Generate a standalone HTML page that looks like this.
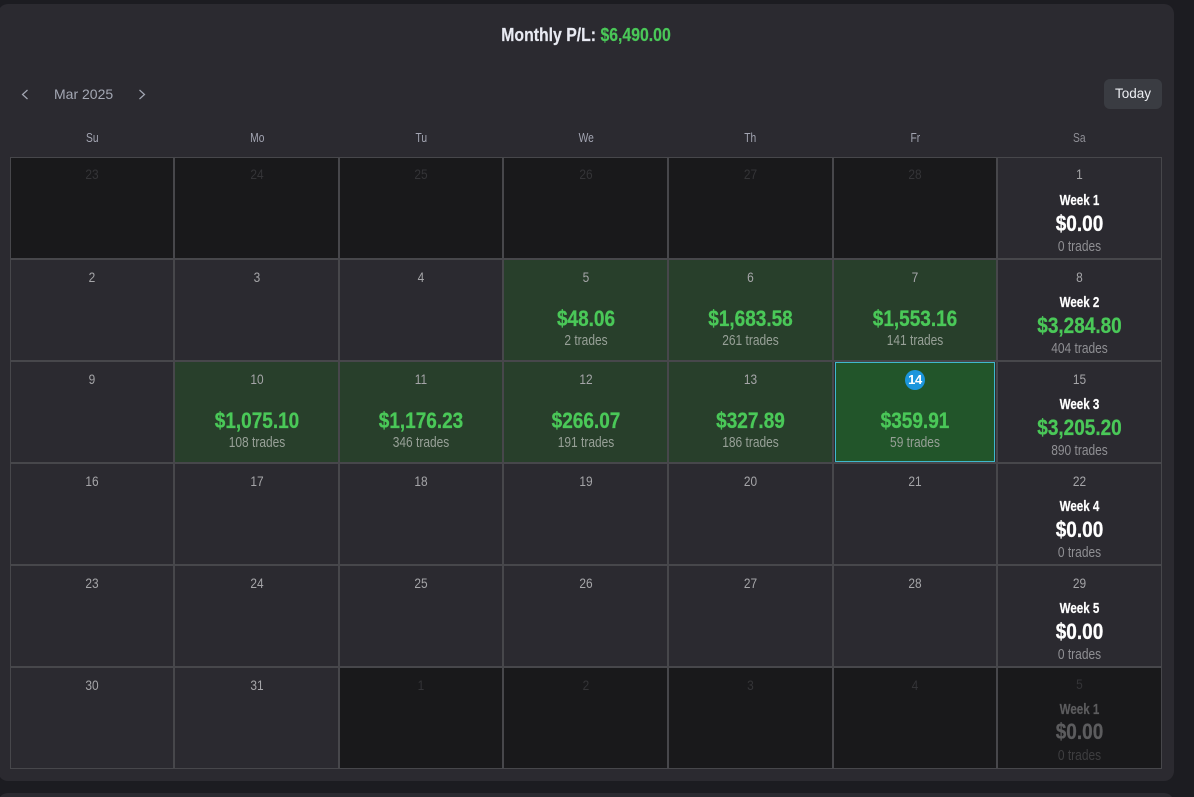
<!DOCTYPE html>
<html><head><meta charset="utf-8"><style>
html,body{margin:0;padding:0;width:1194px;height:797px;overflow:hidden;background:#1c1c21}
*{box-sizing:border-box}
body{font-family:"Liberation Sans",sans-serif;position:relative}
.panel{position:absolute;left:-2px;top:4px;width:1176px;height:777px;background:#2b2a30;border-radius:10px}
.next{position:absolute;left:-2px;top:793px;width:1176px;height:40px;background:#2b2a30;border-radius:10px}
.title{position:absolute;left:0;width:1172px;top:25px;text-align:center;font-size:18px;line-height:20px;font-weight:700;color:#e8eaf2;transform:scaleX(.878);-webkit-text-stroke:.2px}
.title b{color:#4ac858}
.month{position:absolute;left:54px;top:85px;font-size:14px;line-height:18px;color:#a3a7b3}
svg{position:absolute;left:0;top:0}
.today{position:absolute;left:1104px;top:79px;width:58px;height:30px;background:#3a3c42;border-radius:6px;color:#eceef2;font-size:13.5px;line-height:30px;text-align:center}
.hd{position:absolute;top:130px;width:164.57px;text-align:center;font-size:12.5px;line-height:16px;color:#a3a5b2;transform:scaleX(.82)}
.grid{position:absolute;left:10px;top:157px;width:1152px;height:612px;display:grid;grid-template-columns:164px 165px 164px 165px 165px 164px 165px;grid-template-rows:repeat(6,102px)}
.c{position:relative;border:1px solid #47474b;background:#2b2a30;text-align:center}
.off{background:#19191b}
.g{background:#283f2b}
.t:before{content:"";position:absolute;left:1px;top:0;right:1px;bottom:0;border:1px solid #3fb8cc;background:#22552a}
.n,.a,.r,.w{position:absolute;left:0;right:0;display:block}
.c:nth-child(7n+2) span:not(.b),.c:nth-child(7n+4) span:not(.b){left:1px}
.n{top:9px;font-size:14px;line-height:16px;color:#a5a5a8;transform:scaleX(.85)}
.c:nth-child(-n+7) .n{top:8px}
.off .n{color:#343437}
.a{top:46px;font-size:22px;line-height:26px;font-weight:700;color:#4ac858;transform:scaleX(.863);-webkit-text-stroke:.3px}
.r{top:73px;font-size:14.5px;line-height:16px;color:#97a097;transform:scaleX(.825)}
.s .w{top:35px;font-size:14.5px;line-height:16px;font-weight:700;color:#fff;transform:scaleX(.8);-webkit-text-stroke:.2px}
.s .a{top:53px}
.s .r{top:81px;color:#8f8f93}
.s .a.z{color:#fff}
.off.s .n{top:8px}
.off.s .w{color:#5c5c5e;top:34px}
.off.s .a.z{color:#5c5c5e;top:51px}
.off.s .r{color:#3e3e40;top:80px}
.b{position:absolute;top:8px;width:20px;height:20px;line-height:20px;border-radius:50%;background:#1b96dc;color:#fff;font-size:13px;font-weight:700;left:50%;margin-left:-10px;letter-spacing:-.4px}
</style></head><body>
<div class="panel"></div><div class="next"></div>
<div class="title">Monthly P/L: <b>$6,490.00</b></div>
<svg width="200" height="110" viewBox="0 0 200 110"><path d="M27.5 90L22.5 94.5L27.5 99" fill="none" stroke="#a3a7b3" stroke-width="1.2"/><path d="M139.5 90L144.5 94.5L139.5 99" fill="none" stroke="#a3a7b3" stroke-width="1.2"/></svg>
<div class="month">Mar 2025</div>
<div class="today">Today</div>
<div class="hd" style="left:10px">Su</div><div class="hd" style="left:174.6px">Mo</div><div class="hd" style="left:339.1px">Tu</div><div class="hd" style="left:503.7px">We</div><div class="hd" style="left:668.3px">Th</div><div class="hd" style="left:832.9px">Fr</div><div class="hd" style="left:997.4px;color:#8f8f96">Sa</div>
<div class="grid">
<div class="c off"><span class="n">23</span></div><div class="c off"><span class="n">24</span></div><div class="c off"><span class="n">25</span></div><div class="c off"><span class="n">26</span></div><div class="c off"><span class="n">27</span></div><div class="c off"><span class="n">28</span></div>
<div class="c s"><span class="n">1</span><span class="w">Week 1</span><span class="a z">$0.00</span><span class="r">0 trades</span></div>

<div class="c"><span class="n">2</span></div><div class="c"><span class="n">3</span></div><div class="c"><span class="n">4</span></div>
<div class="c g"><span class="n">5</span><span class="a">$48.06</span><span class="r">2 trades</span></div>
<div class="c g"><span class="n">6</span><span class="a">$1,683.58</span><span class="r">261 trades</span></div>
<div class="c g"><span class="n">7</span><span class="a">$1,553.16</span><span class="r">141 trades</span></div>
<div class="c s"><span class="n">8</span><span class="w">Week 2</span><span class="a">$3,284.80</span><span class="r">404 trades</span></div>

<div class="c"><span class="n">9</span></div>
<div class="c g"><span class="n">10</span><span class="a">$1,075.10</span><span class="r">108 trades</span></div>
<div class="c g"><span class="n">11</span><span class="a">$1,176.23</span><span class="r">346 trades</span></div>
<div class="c g"><span class="n">12</span><span class="a">$266.07</span><span class="r">191 trades</span></div>
<div class="c g"><span class="n">13</span><span class="a">$327.89</span><span class="r">186 trades</span></div>
<div class="c t"><span class="b">14</span><span class="a">$359.91</span><span class="r">59 trades</span></div>
<div class="c s"><span class="n">15</span><span class="w">Week 3</span><span class="a">$3,205.20</span><span class="r">890 trades</span></div>

<div class="c"><span class="n">16</span></div><div class="c"><span class="n">17</span></div><div class="c"><span class="n">18</span></div><div class="c"><span class="n">19</span></div><div class="c"><span class="n">20</span></div><div class="c"><span class="n">21</span></div>
<div class="c s"><span class="n">22</span><span class="w">Week 4</span><span class="a z">$0.00</span><span class="r">0 trades</span></div>

<div class="c"><span class="n">23</span></div><div class="c"><span class="n">24</span></div><div class="c"><span class="n">25</span></div><div class="c"><span class="n">26</span></div><div class="c"><span class="n">27</span></div><div class="c"><span class="n">28</span></div>
<div class="c s"><span class="n">29</span><span class="w">Week 5</span><span class="a z">$0.00</span><span class="r">0 trades</span></div>

<div class="c"><span class="n">30</span></div><div class="c"><span class="n">31</span></div>
<div class="c off"><span class="n">1</span></div><div class="c off"><span class="n">2</span></div><div class="c off"><span class="n">3</span></div><div class="c off"><span class="n">4</span></div>
<div class="c off s"><span class="n">5</span><span class="w">Week 1</span><span class="a z">$0.00</span><span class="r">0 trades</span></div>
</div>
</body></html>
